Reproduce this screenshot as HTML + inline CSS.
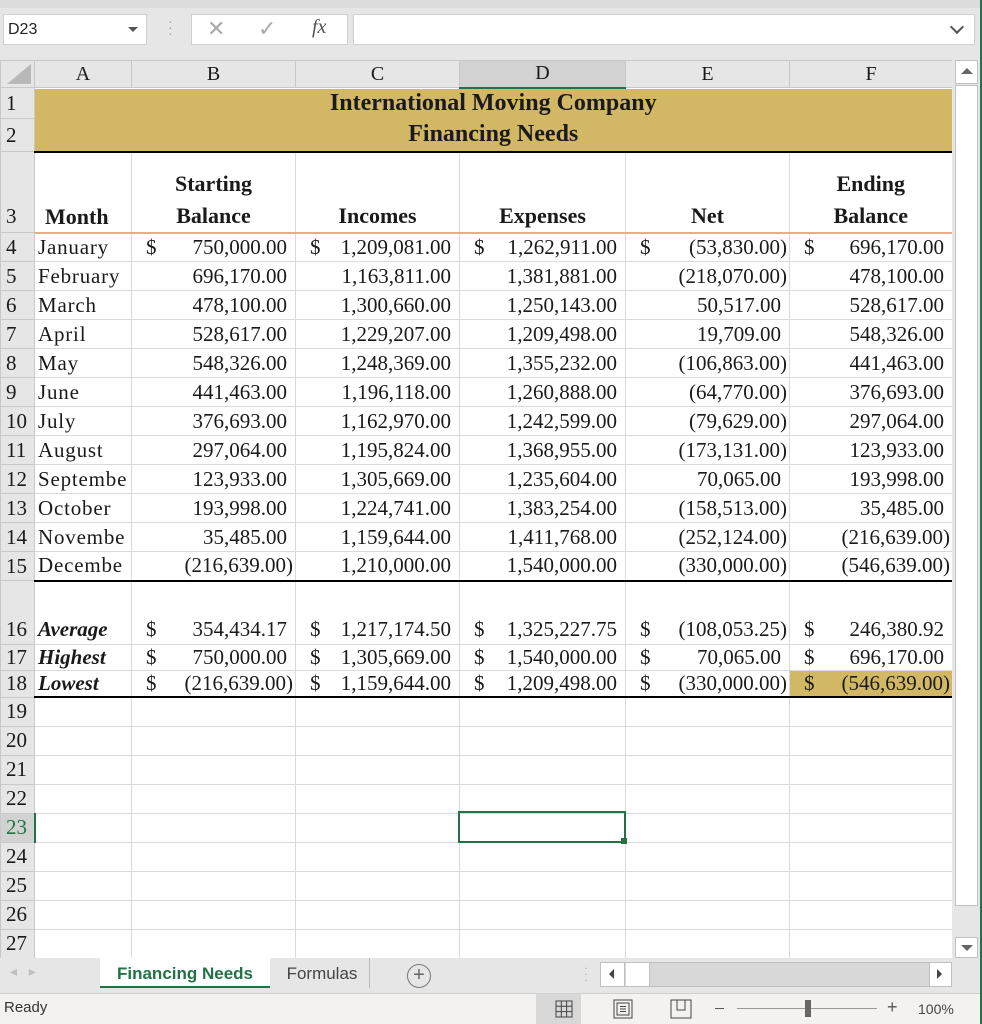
<!DOCTYPE html>
<html><head><meta charset="utf-8">
<style>
*{margin:0;padding:0;box-sizing:border-box}
body{width:982px;height:1024px;overflow:hidden;background:#e6e6e6;position:relative;font-family:"Liberation Serif",serif;color:#1a1a1a}
.abs{position:absolute}
.ui{font-family:"Liberation Sans",sans-serif}
table{position:absolute;left:0;top:60px;border-collapse:collapse;table-layout:fixed;background:#fff}
td{border:1px solid #dadada;font-size:21px;white-space:nowrap;overflow:hidden;position:relative;padding:0}
td.h{background:#e6e6e6;border-color:#c8c8c8;font-size:21px;padding-left:5px;text-align:left}
tr.ch td{background:#e6e6e6;border-color:#c8c8c8;text-align:center;font-size:20px;padding:0}
td.m{text-align:right;padding-right:8px}
td.n{text-align:right;padding-right:2px}
td.m i,td.n i{font-style:normal;position:absolute;left:14px}
td.l{padding-left:3px;letter-spacing:0.8px}
.bb td{border-bottom:2px solid #000}
td.tt{text-align:center;font-weight:bold;font-size:24px;border-top:none;border-left:none;border-bottom:none;border-right:2px solid #000;background:#d2b865}
</style></head><body>
<div class="abs ui" style="left:0;top:0;width:982px;height:8px;background:#dcdcdc"></div>
<div class="abs ui" style="left:3px;top:14px;width:144px;height:31px;background:#fff;border:1px solid #d0d0d0;font-size:16px;padding:6px 4px;color:#222">D23</div>
<div class="abs" style="left:128px;top:27px;width:0;height:0;border-left:5px solid transparent;border-right:5px solid transparent;border-top:5px solid #555"></div>
<div class="abs" style="left:168px;top:21px;color:#999;font-size:14px;line-height:6px">·<br>·<br>·</div>
<div class="abs" style="left:191px;top:14px;width:157px;height:31px;background:#fff;border:1px solid #d0d0d0"></div>
<div class="abs ui" style="left:207px;top:16px;font-size:22px;color:#aaa">✕</div>
<div class="abs ui" style="left:258px;top:16px;font-size:22px;color:#aaa">✓</div>
<div class="abs" style="left:312px;top:16px;font-size:20px;font-style:italic;color:#555">fx</div>
<div class="abs" style="left:353px;top:14px;width:622px;height:31px;background:#fff;border:1px solid #d0d0d0"></div>
<div class="abs" style="left:952px;top:22px;width:10px;height:10px;border-right:2px solid #555;border-bottom:2px solid #555;transform:rotate(45deg)"></div>

<table>
<colgroup><col style="width:34px"><col style="width:97px"><col style="width:164px"><col style="width:164px"><col style="width:166px"><col style="width:164px"><col style="width:163px"></colgroup>
<tr class="ch" style="height:27px"><td style="background:#e6e6e6"><div style="position:absolute;right:3px;bottom:3px;width:0;height:0;border-left:24px solid transparent;border-bottom:20px solid #b8b8b8"></div></td><td>A</td><td>B</td><td>C</td><td style="background:#d2d2d2;border-bottom:2px solid #217346">D</td><td>E</td><td>F</td></tr>
<tr style="height:31px"><td class="h">1</td><td colspan="6" class="tt">International Moving Company</td></tr>
<tr style="height:33px"><td class="h">2</td><td colspan="6" class="tt" style="border-bottom:2px solid #000">Financing Needs</td></tr>
<tr style="height:81px;font-weight:bold"><td class="h" style="vertical-align:bottom;padding-bottom:3px;font-weight:normal">3</td>
<td style="vertical-align:bottom;padding-bottom:2px;font-weight:bold;font-size:22px;border-bottom:2px solid #f0a88a;padding-left:10px">Month</td>
<td style="text-align:center;vertical-align:bottom;font-weight:bold;font-size:22px;line-height:32px;border-bottom:2px solid #f0a88a">Starting<br>Balance</td>
<td style="text-align:center;vertical-align:bottom;font-weight:bold;font-size:22px;line-height:32px;border-bottom:2px solid #f0a88a">Incomes</td>
<td style="text-align:center;vertical-align:bottom;font-weight:bold;font-size:22px;line-height:32px;border-bottom:2px solid #f0a88a">Expenses</td>
<td style="text-align:center;vertical-align:bottom;font-weight:bold;font-size:22px;line-height:32px;border-bottom:2px solid #f0a88a">Net</td>
<td style="text-align:center;vertical-align:bottom;font-weight:bold;font-size:22px;line-height:32px;border-bottom:2px solid #f0a88a;border-right:2px solid #000">Ending<br>Balance</td></tr>
<tr style="height:29px"><td class="h">4</td><td class="l">January</td><td class="m"><i>$</i>750,000.00</td><td class="m"><i>$</i>1,209,081.00</td><td class="m"><i>$</i>1,262,911.00</td><td class="n"><i>$</i>(53,830.00)</td><td class="m"><i>$</i>696,170.00</td></tr>
<tr style="height:29px"><td class="h">5</td><td class="l">February</td><td class="m">696,170.00</td><td class="m">1,163,811.00</td><td class="m">1,381,881.00</td><td class="n">(218,070.00)</td><td class="m">478,100.00</td></tr>
<tr style="height:29px"><td class="h">6</td><td class="l">March</td><td class="m">478,100.00</td><td class="m">1,300,660.00</td><td class="m">1,250,143.00</td><td class="m">50,517.00</td><td class="m">528,617.00</td></tr>
<tr style="height:29px"><td class="h">7</td><td class="l">April</td><td class="m">528,617.00</td><td class="m">1,229,207.00</td><td class="m">1,209,498.00</td><td class="m">19,709.00</td><td class="m">548,326.00</td></tr>
<tr style="height:29px"><td class="h">8</td><td class="l">May</td><td class="m">548,326.00</td><td class="m">1,248,369.00</td><td class="m">1,355,232.00</td><td class="n">(106,863.00)</td><td class="m">441,463.00</td></tr>
<tr style="height:29px"><td class="h">9</td><td class="l">June</td><td class="m">441,463.00</td><td class="m">1,196,118.00</td><td class="m">1,260,888.00</td><td class="n">(64,770.00)</td><td class="m">376,693.00</td></tr>
<tr style="height:29px"><td class="h">10</td><td class="l">July</td><td class="m">376,693.00</td><td class="m">1,162,970.00</td><td class="m">1,242,599.00</td><td class="n">(79,629.00)</td><td class="m">297,064.00</td></tr>
<tr style="height:29px"><td class="h">11</td><td class="l">August</td><td class="m">297,064.00</td><td class="m">1,195,824.00</td><td class="m">1,368,955.00</td><td class="n">(173,131.00)</td><td class="m">123,933.00</td></tr>
<tr style="height:29px"><td class="h">12</td><td class="l">Septembe</td><td class="m">123,933.00</td><td class="m">1,305,669.00</td><td class="m">1,235,604.00</td><td class="m">70,065.00</td><td class="m">193,998.00</td></tr>
<tr style="height:29px"><td class="h">13</td><td class="l">October</td><td class="m">193,998.00</td><td class="m">1,224,741.00</td><td class="m">1,383,254.00</td><td class="n">(158,513.00)</td><td class="m">35,485.00</td></tr>
<tr style="height:29px"><td class="h">14</td><td class="l">Novembe</td><td class="m">35,485.00</td><td class="m">1,159,644.00</td><td class="m">1,411,768.00</td><td class="n">(252,124.00)</td><td class="n">(216,639.00)</td></tr>
<tr class="bb" style="height:29px"><td class="h" style="border-bottom:1px solid #c8c8c8">15</td><td class="l">Decembe</td><td class="n">(216,639.00)</td><td class="m">1,210,000.00</td><td class="m">1,540,000.00</td><td class="n">(330,000.00)</td><td class="n">(546,639.00)</td></tr>
<tr style="height:64px;vertical-align:bottom"><td class="h" style="vertical-align:bottom;padding-bottom:2px">16</td><td style="font-weight:bold;font-style:italic;padding-left:3px;padding-bottom:2px">Average</td><td class="m" style="padding-bottom:2px"><i>$</i>354,434.17</td><td class="m" style="padding-bottom:2px"><i>$</i>1,217,174.50</td><td class="m" style="padding-bottom:2px"><i>$</i>1,325,227.75</td><td class="n" style="padding-bottom:2px"><i>$</i>(108,053.25)</td><td class="m" style="padding-bottom:2px"><i>$</i>246,380.92</td></tr>
<tr style="height:26px"><td class="h">17</td><td style="font-weight:bold;font-style:italic;padding-left:3px">Highest</td><td class="m"><i>$</i>750,000.00</td><td class="m"><i>$</i>1,305,669.00</td><td class="m"><i>$</i>1,540,000.00</td><td class="m"><i>$</i>70,065.00</td><td class="m"><i>$</i>696,170.00</td></tr>
<tr class="bb" style="height:26px"><td class="h" style="border-bottom:1px solid #c8c8c8">18</td><td style="font-weight:bold;font-style:italic;padding-left:3px">Lowest</td><td class="n"><i>$</i>(216,639.00)</td><td class="m"><i>$</i>1,159,644.00</td><td class="m"><i>$</i>1,209,498.00</td><td class="n"><i>$</i>(330,000.00)</td><td class="n" style="background:#d2b865"><i>$</i>(546,639.00)</td></tr>
<tr style="height:29px"><td class="h">19</td><td></td><td></td><td></td><td></td><td></td><td></td></tr>
<tr style="height:29px"><td class="h">20</td><td></td><td></td><td></td><td></td><td></td><td></td></tr>
<tr style="height:29px"><td class="h">21</td><td></td><td></td><td></td><td></td><td></td><td></td></tr>
<tr style="height:29px"><td class="h">22</td><td></td><td></td><td></td><td></td><td></td><td></td></tr>
<tr style="height:29px"><td class="h" style="background:#d2d2d2;color:#217346;border-right:2px solid #217346">23</td><td></td><td></td><td></td><td></td><td></td><td></td></tr>
<tr style="height:29px"><td class="h">24</td><td></td><td></td><td></td><td></td><td></td><td></td></tr>
<tr style="height:29px"><td class="h">25</td><td></td><td></td><td></td><td></td><td></td><td></td></tr>
<tr style="height:29px"><td class="h">26</td><td></td><td></td><td></td><td></td><td></td><td></td></tr>
<tr style="height:29px"><td class="h">27</td><td></td><td></td><td></td><td></td><td></td><td></td></tr>
</table>
<div class="abs" style="left:458px;top:811px;width:168px;height:32px;border:2px solid #217346"></div>
<div class="abs" style="left:621px;top:838px;width:6px;height:6px;background:#217346"></div>
<div class="abs" style="left:952px;top:60px;width:30px;height:900px;background:#e6e6e6"></div>
<div class="abs" style="left:955px;top:60px;width:23px;height:24px;background:#fff;border:1px solid #c0c0c0"></div>
<div class="abs" style="left:961px;top:68px;border-left:6px solid transparent;border-right:6px solid transparent;border-bottom:6px solid #666"></div>
<div class="abs" style="left:955px;top:85px;width:23px;height:821px;background:#fff;border:1px solid #c0c0c0"></div>
<div class="abs" style="left:955px;top:937px;width:23px;height:21px;background:#fff;border:1px solid #c0c0c0"></div>
<div class="abs" style="left:961px;top:945px;border-left:6px solid transparent;border-right:6px solid transparent;border-top:6px solid #666"></div>
<div class="abs" style="left:980px;top:0;width:2px;height:1024px;background:#217346"></div>
<div class="abs ui" style="left:0;top:958px;width:980px;height:35px;background:#e6e6e6"></div>
<div class="abs ui" style="left:10px;top:963px;color:#c0c0c0;font-size:14px">◂ &nbsp; ▸</div>
<div class="abs ui" style="left:100px;top:958px;width:170px;height:30px;background:#fff;border-bottom:2px solid #217346;color:#217346;font-weight:bold;font-size:17px;text-align:center;line-height:32px">Financing Needs</div>
<div class="abs ui" style="left:275px;top:958px;width:95px;height:30px;font-size:17px;color:#444;line-height:32px;text-align:center;border-right:1px solid #bbb">Formulas</div>
<div class="abs ui" style="left:407px;top:964px;width:24px;height:24px;border:1.5px solid #777;border-radius:50%;text-align:center;line-height:21px;font-size:20px;color:#666">+</div>
<div class="abs" style="left:584px;top:965px;color:#aaa;font-size:12px;line-height:6px">·<br>·<br>·</div>
<div class="abs" style="left:600px;top:962px;width:352px;height:25px;background:#d8d8d8;border:1px solid #c0c0c0"></div>
<div class="abs" style="left:601px;top:963px;width:24px;height:23px;background:#fff;border-right:1px solid #c0c0c0"></div>
<div class="abs" style="left:609px;top:969px;border-top:5px solid transparent;border-bottom:5px solid transparent;border-right:5px solid #444"></div>
<div class="abs" style="left:626px;top:963px;width:24px;height:23px;background:#fff;border-right:1px solid #c0c0c0"></div>
<div class="abs" style="left:929px;top:963px;width:22px;height:23px;background:#fff;border-left:1px solid #c0c0c0"></div>
<div class="abs" style="left:937px;top:969px;border-top:5px solid transparent;border-bottom:5px solid transparent;border-left:5px solid #444"></div>
<div class="abs ui" style="left:0;top:993px;width:980px;height:31px;background:#f3f2f1;border-top:1px solid #d0d0d0"></div>
<div class="abs ui" style="left:4px;top:999px;font-size:15px;color:#333">Ready</div>
<div class="abs" style="left:536px;top:994px;width:45px;height:30px;background:#d8d8d8"></div>
<svg class="abs" style="left:555px;top:1000px" width="18" height="18"><rect x="1" y="1" width="16" height="16" fill="none" stroke="#444"/><path d="M1 6.3H17M1 11.6H17M6.3 1V17M11.6 1V17" stroke="#444"/></svg>
<svg class="abs" style="left:613px;top:999px" width="20" height="20"><rect x="1" y="1" width="18" height="18" fill="none" stroke="#444"/><rect x="4" y="4" width="12" height="12" fill="none" stroke="#444"/><path d="M7 7.5H13M7 10H13M7 12.5H13" stroke="#444"/></svg>
<svg class="abs" style="left:670px;top:999px" width="22" height="20"><path d="M1 1H21V19H1Z M7 1V11H15V1" fill="none" stroke="#444"/></svg>
<div class="abs" style="left:715px;top:1008px;width:9px;height:1px;background:#555"></div>
<div class="abs" style="left:737px;top:1008px;width:140px;height:1px;background:#999"></div>
<div class="abs" style="left:805px;top:1000px;width:6px;height:17px;background:#666"></div>
<div class="abs ui" style="left:887px;top:997px;font-size:18px;color:#555">+</div>
<div class="abs ui" style="left:918px;top:1001px;font-size:14px;color:#444">100%</div>
</body></html>
